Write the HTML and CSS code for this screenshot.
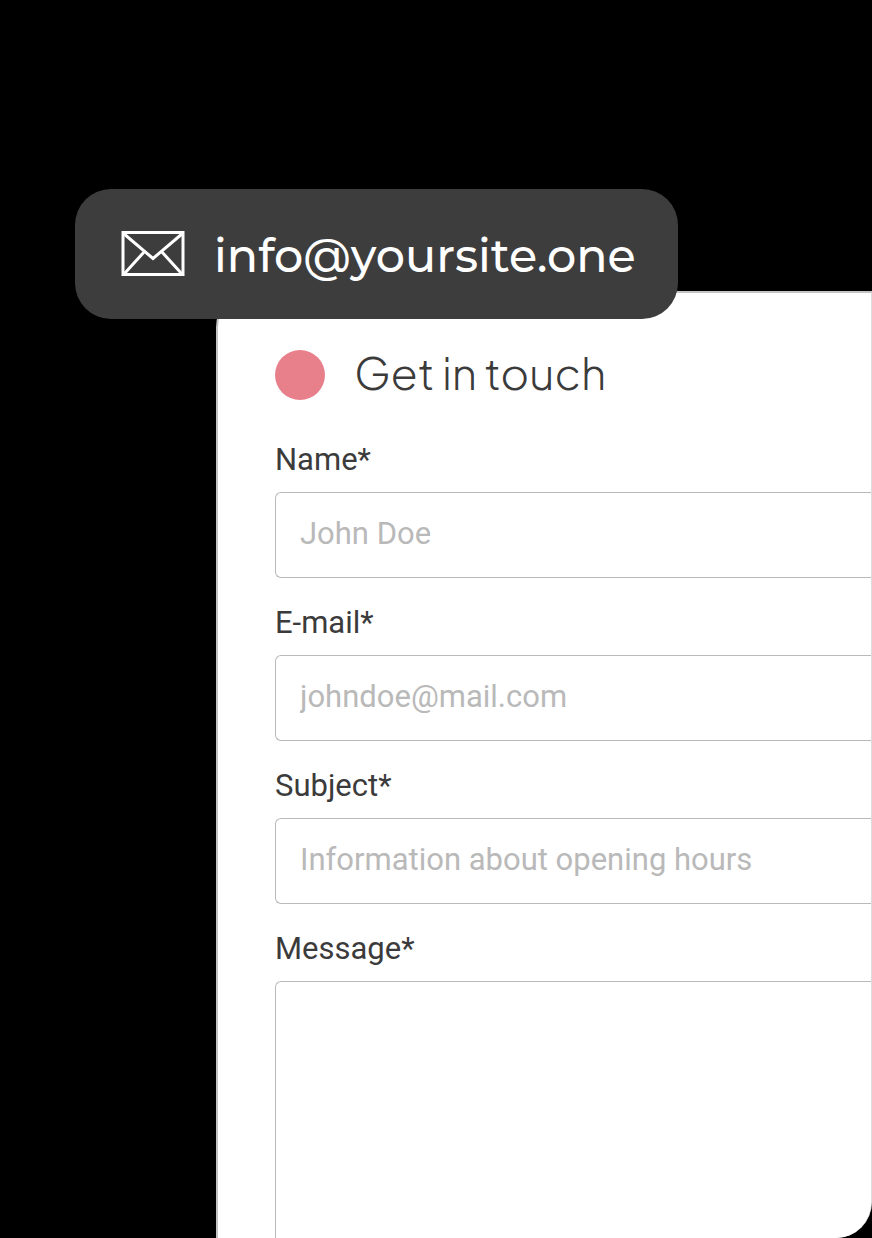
FILE: index.html
```html
<!DOCTYPE html>
<html lang="en">
<head>
    <meta charset="UTF-8">
    <meta name="viewport" content="width=device-width, initial-scale=1.0">
    <title>Get in touch</title>
    <link rel="stylesheet" href="styles.css">
</head>
<body>

<main class="page">
    <a class="mail-badge" href="mailto:info@yoursite.one">
        <svg class="mail-icon" viewBox="0 0 64 46" fill="none" stroke="#fff" stroke-width="3" aria-hidden="true">
            <rect x="2" y="1.5" width="60" height="42"/>
            <path d="M2.5 2.5L32 27.5L61.5 2.5M3.5 42.5L23.5 20.5M60.5 42.5L40.5 20.5"/>
        </svg>
        info@yoursite.one
    </a>

    <section class="card">
        <div class="card-header">
            <span class="dot"></span>
            <h1>Get in touch</h1>
        </div>
        <form class="contact-form">
            <div class="field">
                <label for="name">Name*</label>
                <input type="text" id="name" name="name" placeholder="John Doe" required>
            </div>
            <div class="field">
                <label for="email">E-mail*</label>
                <input type="email" id="email" name="email" placeholder="johndoe@mail.com" required>
            </div>
            <div class="field">
                <label for="subject">Subject*</label>
                <input type="text" id="subject" name="subject" placeholder="Information about opening hours" required>
            </div>
            <div class="field field-message">
                <label for="message">Message*</label>
                <textarea id="message" name="message" required></textarea>
            </div>
        </form>
    </section>
</main>

</body>
</html>
```
FILE: styles.css
```css
* {
    box-sizing: border-box;
}
body {
    margin: 0;
    background-color: #000;
    color: #3b3b3b;
    font-family: Roboto, Arial, sans-serif;
}
.page {
    position: relative;
    display: flex;
    min-height: 100vh;
    padding: 291px 0 0 216px;
}

/* Email badge over the card corner */
.mail-badge {
    position: absolute;
    top: 189px;
    left: 75px;
    display: flex;
    align-items: flex-start;
    gap: 29px;
    padding: 42px 42px 38px 46px;
    border-radius: 36px;
    background-color: #3d3d3d;
    color: #fff;
    font-family: Montserrat, Inter, sans-serif;
    font-size: 46px;
    font-weight: 500;
    line-height: 50px;
    text-decoration: none;
}
.mail-icon {
    width: 64px;
    height: 46px;
}

.card {
    flex: 1;
    display: flex;
    flex-direction: column;
    padding: 57px 0 0 57px;
    border: 2px solid #c4c4c4;
    border-right: 1px solid #dcdcdc;
    border-bottom: none;
    border-radius: 36px 0 36px 0;
    background-color: #fff;
    overflow: hidden;
}
.card-header {
    display: flex;
    align-items: flex-start;
    gap: 29px;
    height: 50px;
    margin-bottom: 42px;
}
.dot {
    width: 50px;
    height: 50px;
    border-radius: 50%;
    background-color: #e8808c;
}
h1 {
    margin: 0;
    font-family: "Plus Jakarta Sans", Urbanist, Lato, sans-serif;
    font-size: 44px;
    font-weight: 300;
    line-height: 44px;
}

/* Form */
.contact-form {
    flex: 1;
    display: flex;
    flex-direction: column;
    gap: 27px;
}
.field {
    display: flex;
    flex-direction: column;
    gap: 14px;
}
.field-message {
    flex: 1;
}
label {
    font-size: 31px;
    line-height: 36px;
}
input,
textarea {
    width: 100%;
    padding: 22px 24px 26px;
    border: 1px solid #b9b9b9;
    border-right: none;
    border-radius: 6px 0 0 6px;
    background-color: #fff;
    color: #3b3b3b;
    font-family: inherit;
    font-size: 31px;
    line-height: 36px;
    outline: none;
}
input {
    height: 86px;
}
textarea {
    flex: 1;
    border-bottom: none;
    border-bottom-left-radius: 0;
    resize: none;
}
input::placeholder {
    color: #b9b9b9;
}
```
